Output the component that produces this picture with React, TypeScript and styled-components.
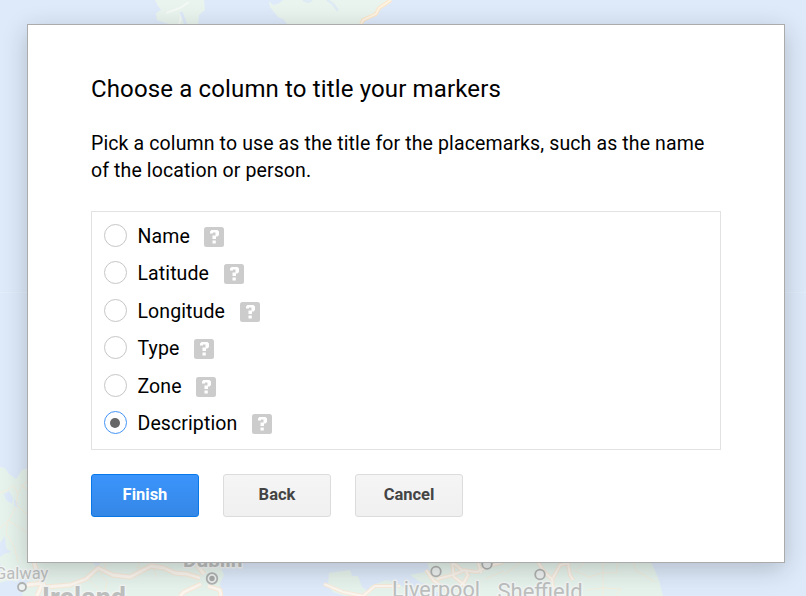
import React, { useState } from "react";
import styled, { createGlobalStyle } from "styled-components";

const GlobalStyle = createGlobalStyle`
  * { box-sizing: border-box; }
  body { margin: 0; overflow: hidden; font-family: Roboto, "Liberation Sans", sans-serif; }
`;

const Page = styled.main`
  position: relative;
  width: 806px;
  height: 596px;
  overflow: hidden;
  background: #deeafa;
`;

const MapCanvas = styled.svg`
  position: absolute;
  inset: 0;
`;

const Dialog = styled.section`
  position: relative;
  width: 758px;
  height: 539px;
  margin: 24px 0 0 27px;
  padding: 48px 63px 0;
  background: #fff;
  border: 1px solid #ababab;
  box-shadow: 0 6px 24px rgba(0, 0, 0, 0.2);
`;

const PageFlow = styled.div`
  display: flow-root;
`;

const Title = styled.h1`
  margin: 0;
  font-size: 24px;
  font-weight: 400;
  line-height: 32px;
  letter-spacing: 0.14px;
  white-space: nowrap;
  color: #000;
`;

const Intro = styled.p`
  margin: 25px 0 0;
  font-size: 19.5px;
  line-height: 27px;
  letter-spacing: 0.12px;
  white-space: nowrap;
  color: #000;
`;

const Options = styled.div`
  display: flex;
  flex-direction: column;
  width: 630px;
  height: 239px;
  margin-top: 27px;
  padding: 5px 12px 0;
  border: 1px solid #e2e2e2;
`;

const Option = styled.label`
  display: flex;
  align-items: center;
  height: 37.5px;
  flex: none;
`;

const Radio = styled.input`
  appearance: none;
  display: grid;
  place-content: center;
  flex: none;
  width: 23px;
  height: 23px;
  margin: 0 0 1px;
  border: 1px solid #c6c6c6;
  border-radius: 50%;
  background: #fff;

  &:checked {
    border-color: #4394f8;
  }
  &:checked::before {
    content: "";
    width: 10px;
    height: 10px;
    margin-right: 1px;
    border-radius: 50%;
    background: #666;
  }
`;

const OptionText = styled.span`
  margin: 2px 14.6px 0 10.5px;
  font-size: 19.5px;
  line-height: 24px;
  letter-spacing: 0.1px;
`;

const HelpMark = styled.svg`
  display: block;
  flex: none;
  margin-top: 2px;
`;

const Actions = styled.div`
  display: flex;
  gap: 24px;
  margin-top: 24px;
`;

const Button = styled.button<{ $primary?: boolean }>`
  width: 108px;
  height: 43px;
  padding: 0 0 1px;
  border: 1px solid ${(p) => (p.$primary ? "#0878e8" : "#dcdcdc")};
  border-radius: 3px;
  background: ${(p) =>
    p.$primary
      ? "linear-gradient(#3b94fb, #3587e6)"
      : "linear-gradient(#f5f5f5, #f0f0f0)"};
  color: ${(p) => (p.$primary ? "#fff" : "#444")};
  font: 700 16.5px/24px Roboto, "Liberation Sans", sans-serif;
`;

const Place = styled.text<{ $size: number; $bold?: boolean }>`
  font-family: Roboto, "Liberation Sans", sans-serif;
  font-size: ${(p) => p.$size}px;
  font-weight: ${(p) => (p.$bold ? 700 : 400)};
  fill: #bcbfbe;
  stroke: #f2f5f4;
  stroke-width: 3px;
  paint-order: stroke;
  stroke-linejoin: round;
`;

function Backdrop() {
  return (
    <MapCanvas width="806" height="596" viewBox="0 0 806 596" aria-hidden="true">
      <path d="M0 292.5H806" stroke="#e3eefb" />
      <g fill="#e9f4ee">
        <path d="M155 0L158 6 161 10 156 13 157 20 169 24H198L199 15 205 10 204 0Z" />
        <path d="M269 1L273 5 278 4 283 0H391L380 10 376 15 363 21 361 25H288L283 19 278 17 274 12 270 7Z" />
      </g>
      <path d="M166 13L180 8 189 2M179 25L181 16 187 25" fill="none" stroke="#f4f9f5" strokeWidth="2" />
      <path d="M181 12L186 25" stroke="#deeafa" strokeWidth="3" />
      <path d="M327 0L333 4 338 11M303 0L308 2 312 0" fill="none" stroke="#deebf4" strokeWidth="2.5" />
      <path d="M391 0L379 8 376 14 363 20 361 24" fill="none" stroke="#fae8ce" strokeWidth="4" />
      <path d="M391 0L379 8 376 14 363 20 361 24" fill="none" stroke="#fff5e6" strokeWidth="1.5" />

      <path d="M0 467L5 468 9 474 16 479 22 470 28 468V555H205L219 563 224 575 220 584 222 596H0V575L8 574 2 568 0 563Z" fill="#e6f3ec" />
      <path d="M4 494L9 491 13 498 12 504 6 500ZM14 499L18 503 17 508 14 505ZM0 543L5 536 6 548 11 552 4 554 0 557ZM0 583L10 580 17 582 21 576 30 576 31 580 24 586 22 596H0ZM92 562H101L97 567Z" fill="#deeafa" />
      <g fill="none" stroke="#f4eddd" strokeWidth="1">
        <path d="M0 493L8 490 13 485 18 493 16 504 28 515M0 528L9 520 16 507M8 521L6 533 14 546 18 562M9 521L28 533M20 484L28 490M28 480L17 493M105 562V569L100 574 107 581 104 596M90 581L105 596M140 562L137 568 153 568 157 577" />
      </g>
      <g fill="none" stroke="#f7e9d9" strokeWidth="5" strokeLinejoin="round">
        <path d="M27 585L43 583 45 587 70 585 86 579 98 568 113 575 130 577 151 566 164 568 175 573 187 574 200 578M34 562L38 575 42 584 37 596M201 584L184 592 180 596M208 586L220 590 221 596M197 565L204 574" />
      </g>
      <g fill="none" stroke="#fbf6ef" strokeWidth="2.8" strokeLinejoin="round">
        <path d="M27 585L43 583 45 587 70 585 86 579 98 568 113 575 130 577 151 566 164 568 175 573 187 574 200 578M34 562L38 575 42 584 37 596M201 584L184 592 180 596M208 586L220 590 221 596M197 565L204 574" />
      </g>

      <path d="M329 573L343 571 350 570 352 576 358 576 362 587 369 592V596H345L333 592 328 585ZM370 586L386 580 398 583 406 589 409 596H369ZM410 575L430 571 427 562H651L659 580 663 596H442L430 586 420 582Z" fill="#e6f3ec" />
      <path d="M324 584L343 592 363 596 375 586 400 586M426 570L434 581 446 589M452 562L462 570 477 572 489 566 503 562M437 579L452 575 465 570 468 575 463 584 450 590M452 562L454 577 466 586M478 562L481 573M538 562L544 572 552 579 554 596M553 578L560 565 568 563 570 575 573 580" fill="none" stroke="#f7e9d9" strokeWidth="4" />
      <path d="M324 584L343 592 363 596 375 586 400 586M426 570L434 581 446 589M452 562L462 570 477 572 489 566 503 562M437 579L452 575 465 570 468 575 463 584 450 590M452 562L454 577 466 586M478 562L481 573M538 562L544 572 552 579 554 596M553 578L560 565 568 563 570 575 573 580" fill="none" stroke="#fbf6ef" strokeWidth="2" />
      <path d="M584 563L575 571 589 577 602 573 617 573 617 562M603 562V596M587 590L602 588 621 589 616 596M633 562L636 571 646 576 654 582M503 575L520 563M485 579L504 571" fill="none" stroke="#f4eddd" />

      <Place x="-5" y="579" $size={16.5}>Galway</Place>
      <Place x="42" y="607" $size={27} $bold>Ireland</Place>
      <Place x="183" y="567" $size={20.8} $bold>Dublin</Place>
      <Place x="392" y="596.5" $size={21.6}>Liverpool</Place>
      <Place x="497.5" y="598.5" $size={22}>Sheffield</Place>
      <g fill="#eef2f1" stroke="#b0b3b2" strokeWidth="1.8">
        <circle cx="22" cy="587" r="4" />
        <circle cx="212" cy="578.5" r="5.3" />
        <circle cx="436" cy="571.5" r="4.8" />
        <circle cx="487" cy="564" r="4.8" />
        <circle cx="540" cy="574.5" r="4.8" />
      </g>
      <circle cx="212" cy="578.5" r="2.7" fill="#a6a9a8" />
    </MapCanvas>
  );
}

function Help() {
  return (
    <HelpMark width="20" height="20" viewBox="0 0 20 20" aria-label="Help">
      <rect width="20" height="20" rx="2.5" fill="#ccc" />
      <path d="M6 6.5V4.5L7.5 3H13.5L15 4.5V8L13.5 9.5H12V12H8.5V8.5H11.5V5.5H9V6.5ZM8.5 13.5H11.8V16.5H8.5Z" fill="#fff" />
    </HelpMark>
  );
}

const columns = ["Name", "Latitude", "Longitude", "Type", "Zone", "Description"];

export default function App() {
  const [selected, setSelected] = useState("Description");
  return (
    <Page>
      <GlobalStyle />
      <Backdrop />
      <PageFlow>
        <Dialog role="dialog" aria-labelledby="dialog-title">
          <Title id="dialog-title">Choose a column to title your markers</Title>
          <Intro>
            Pick a column to use as the title for the placemarks, such as the name
            <br />
            of the location or person.
          </Intro>
          <Options role="radiogroup">
            {columns.map((name) => (
              <Option key={name}>
                <Radio
                  type="radio"
                  name="column"
                  checked={selected === name}
                  onChange={() => setSelected(name)}
                />
                <OptionText>{name}</OptionText>
                <Help />
              </Option>
            ))}
          </Options>
          <Actions>
            <Button $primary>Finish</Button>
            <Button>Back</Button>
            <Button>Cancel</Button>
          </Actions>
        </Dialog>
      </PageFlow>
    </Page>
  );
}
